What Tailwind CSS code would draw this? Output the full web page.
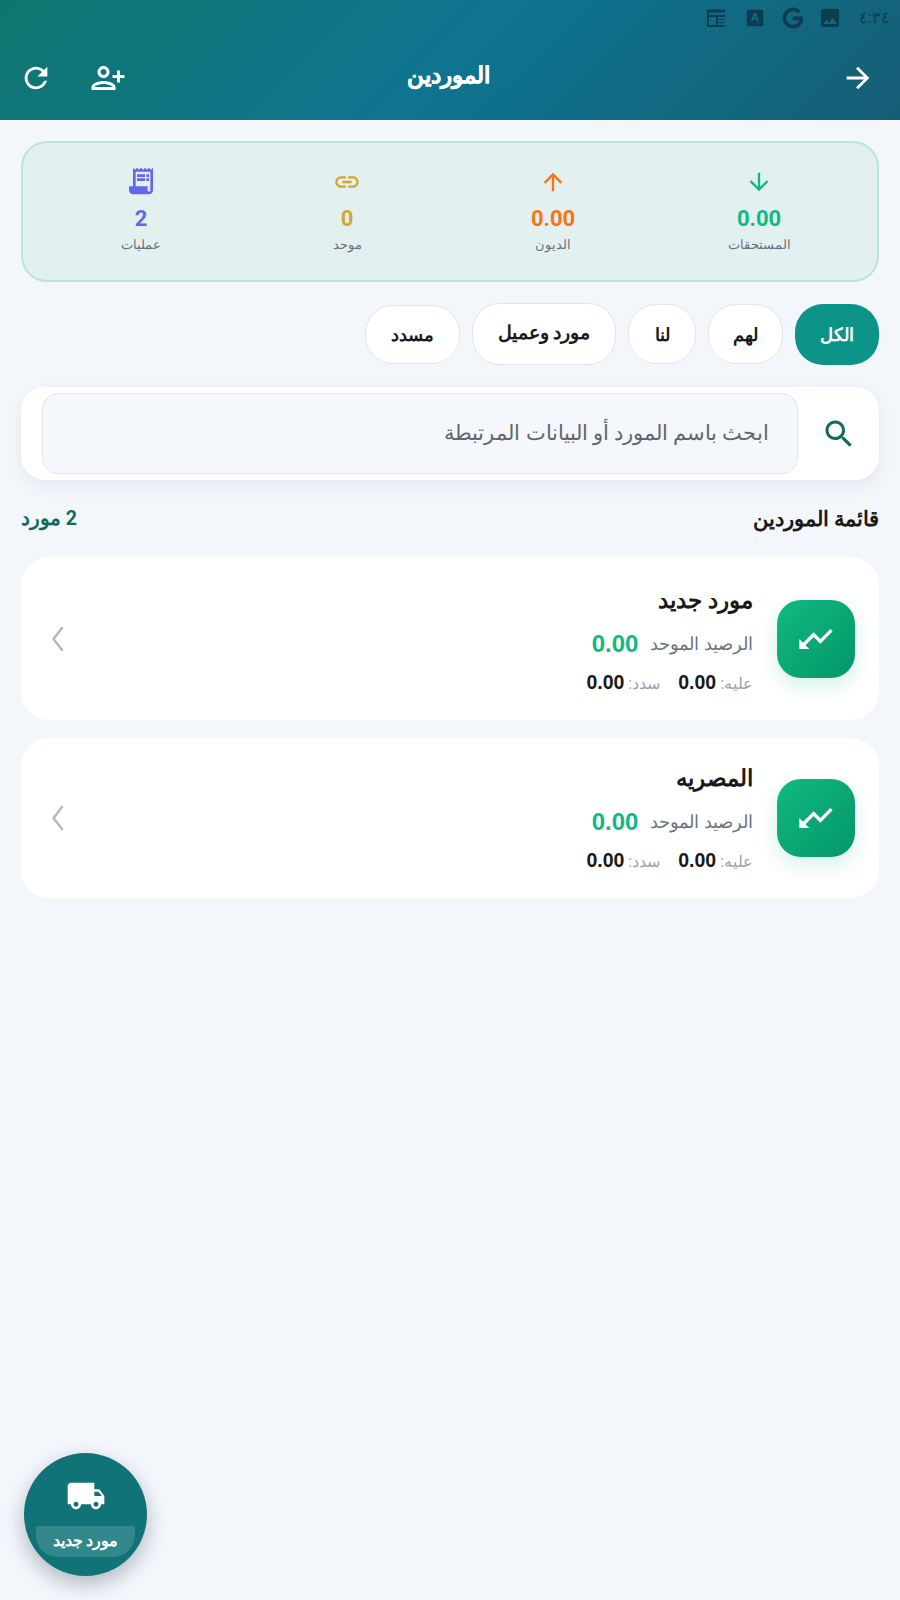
<!DOCTYPE html>
<html lang="ar" dir="rtl">
<head>
<meta charset="utf-8">
<script src="https://cdn.jsdelivr.net/npm/@tailwindcss/browser@4"></script>
</head>
<body class="bg-[#f3f6fb]">
<div class="relative w-[900px] h-[1600px] overflow-hidden bg-[#f3f6fb] font-['Roboto','Noto_Sans',sans-serif]">

  <header class="h-[120px] bg-[linear-gradient(135deg,#0f766e_0%,#0e7490_50%,#155e75_100%)]">
    <div class="h-[36px] flex items-center pr-[10px] gap-[14px] text-[#0b3d4f]">
      <span class="text-[16px] w-[30px] text-center ml-[4px]">٤:٣٤</span>
      <svg class="w-[24px] h-[24px]" viewBox="0 0 24 24" fill="currentColor"><path d="M21 19V5c0-1.100-.9-2-2-2H5c-1.100 0-2 .9-2 2v14c0 1.100.9 2 2 2h14c1.100 0 2-.9 2-2zM8.500 13.500l2.500 3.010L14.500 12l4.500 6H5l3.500-4.500z"/></svg>
      <svg class="w-[24px] h-[24px] -mr-[1px]" viewBox="0 0 24 24" fill="currentColor" stroke="currentColor" stroke-width="1"><path d="M21.350 11.100h-9.170v2.730h6.510c-.33 3.810-3.500 5.440-6.500 5.440C8.360 19.270 5 16.250 5 12c0-4.100 3.200-7.270 7.200-7.270 3.090 0 4.900 1.970 4.900 1.970L19 4.720S16.560 2 12.100 2C6.420 2 2.030 6.800 2.030 12c0 5.050 4.130 10 10.220 10 5.350 0 9.250-3.670 9.250-9.090 0-1.150-.15-1.810-.15-1.810z"/></svg>
      <svg class="w-[22px] h-[22px] mx-[1px]" viewBox="0 0 24 24" fill="currentColor"><path fill-rule="evenodd" d="M5 3h14c1.100 0 2 .9 2 2v14c0 1.100-.9 2-2 2H5c-1.100 0-2-.9-2-2V5c0-1.100.9-2 2-2zm5.800 3.500L7.500 15.500h2l.6-1.800h3.600l.6 1.800h2L13.200 6.500h-2.400zm1.100 2.300 1.200 3.300h-2.400l1.200-3.300zM14 17h1v1h-1zm2 0h1v1h-1zm2 0h1v1h-1z"/></svg>
      <svg class="w-[24px] h-[24px]" viewBox="0 0 24 24" fill="currentColor"><path fill-rule="evenodd" d="M2 3l1 1 1-1 1 1 1-1 1 1 1-1 1 1 1-1 1 1 1-1 1 1 1-1 1 1 1-1 1 1 1-1 1 1 1-1v16c0 1.100-.9 2-2 2H4c-1.100 0-2-.9-2-2V3zm2 3.500V9h16V6.500H4zM4 11v8h7v-8H4zm9 0v2h7v-2h-7zm0 3v2h7v-2h-7zm0 3v2h7v-2h-7z"/></svg>
    </div>
    <div class="h-[78px] grid grid-cols-[1fr_auto_1fr] items-center pr-[25px] pl-[19px] pt-[6px] text-white">
      <svg class="w-[34px] h-[34px] justify-self-start" viewBox="0 0 24 24" fill="currentColor"><path d="M12 4l-1.410 1.410L16.170 11H4v2h12.170l-5.580 5.590L12 20l8-8z"/></svg>
      <h1 class="text-[23px] font-bold leading-none -mt-[6px] mr-[-3px] [-webkit-text-stroke:0.4px_white]">الموردين</h1>
      <div class="flex items-center justify-self-end gap-[37px]">
        <svg class="w-[36px] h-[36px] -scale-x-100" viewBox="0 0 24 24" fill="currentColor"><path d="M15 12c2.210 0 4-1.790 4-4s-1.790-4-4-4-4 1.790-4 4 1.790 4 4 4zm0-6c1.100 0 2 .9 2 2s-.9 2-2 2-2-.9-2-2 .9-2 2-2zm0 8c-2.670 0-8 1.340-8 4v2h16v-2c0-2.660-5.330-4-8-4zm-6 4c.22-.72 3.310-2 6-2 2.700 0 5.800 1.290 6 2H9zm-3-3v-3h3v-2H6V7H4v3H1v2h3v3h2z"/></svg>
        <svg class="w-[34px] h-[34px]" viewBox="0 0 24 24" fill="currentColor"><path d="M17.650 6.350C16.200 4.900 14.210 4 12 4c-4.420 0-7.990 3.580-7.990 8s3.570 8 7.990 8c3.730 0 6.840-2.550 7.730-6h-2.080c-.82 2.330-3.040 4-5.650 4-3.310 0-6-2.690-6-6s2.690-6 6-6c1.660 0 3.140.69 4.220 1.780L13 11h7V4l-2.350 2.350z"/></svg>
      </div>
    </div>
  </header>

  <main class="px-[21px] pt-[21px]">
    <section class="h-[141px] rounded-[26px] border-2 border-[#b8e6da] bg-[#e2f1ef] grid grid-cols-4 px-[15px] pt-[25px]">
      <div class="flex flex-col items-center">
        <svg class="w-[28px] h-[28px] text-[#10b981]" viewBox="0 0 24 24" fill="currentColor"><path d="M20 12l-1.410-1.410L13 16.170V4h-2v12.170l-5.580-5.590L4 12l8 8 8-8z"/></svg>
        <span class="mt-[10px] text-[22px] leading-[26px] font-bold text-[#10b981]">0.00</span>
        <span class="mt-[4px] text-[13px] leading-[18px] text-[#6b7280]">المستحقات</span>
      </div>
      <div class="flex flex-col items-center">
        <svg class="w-[28px] h-[28px] text-[#f97316]" viewBox="0 0 24 24" fill="currentColor"><path d="M4 12l1.410 1.410L11 7.830V20h2V7.830l5.580 5.590L20 12l-8-8-8 8z"/></svg>
        <span class="mt-[10px] text-[22px] leading-[26px] font-bold text-[#f97316]">0.00</span>
        <span class="mt-[4px] text-[13px] leading-[18px] text-[#6b7280]">الديون</span>
      </div>
      <div class="flex flex-col items-center">
        <svg class="w-[28px] h-[28px] text-[#d4a72c]" viewBox="0 0 24 24" fill="currentColor"><path d="M3.900 12c0-1.710 1.390-3.100 3.100-3.100h4V7H7c-2.760 0-5 2.240-5 5s2.240 5 5 5h4v-1.900H7c-1.710 0-3.100-1.390-3.100-3.100zM8 13h8v-2H8v2zm9-6h-4v1.900h4c1.710 0 3.100 1.390 3.100 3.100s-1.390 3.100-3.100 3.100h-4V17h4c2.760 0 5-2.240 5-5s-2.240-5-5-5z"/></svg>
        <span class="mt-[10px] text-[22px] leading-[26px] font-bold text-[#d4a72c]">0</span>
        <span class="mt-[4px] text-[13px] leading-[18px] text-[#6b7280]">موحد</span>
      </div>
      <div class="flex flex-col items-center">
        <svg class="w-[32px] h-[32px] -mt-[3px] -mb-[1px] text-[#6366f1]" viewBox="0 0 24 24" fill="currentColor"><path d="M19.500 3.500 18 2l-1.500 1.500L15 2l-1.500 1.500L12 2l-1.500 1.500L9 2 7.500 3.500 6 2v14H3v3c0 1.660 1.340 3 3 3h12c1.660 0 3-1.340 3-3V2l-1.500 1.500zM19 19c0 .55-.45 1-1 1s-1-.45-1-1v-3H8V5h11v14zM9 7h6v2H9zm7 0h2v2h-2zm-7 3h6v2H9zm7 0h2v2h-2z"/></svg>
        <span class="mt-[10px] text-[22px] leading-[26px] font-bold text-[#6366f1]">2</span>
        <span class="mt-[4px] text-[13px] leading-[18px] text-[#6b7280]">عمليات</span>
      </div>
    </section>

    <nav class="mt-[20px] flex items-center gap-[12px] h-[64px]">
      <span class="w-[84px] h-[61px] justify-center flex items-center rounded-[28px] bg-[#0d9488] text-white text-[18px] font-bold">الكل</span>
      <span class="w-[75px] h-[60px] justify-center flex items-center rounded-[28px] bg-white border-[1.5px] border-[#e2e5ea] text-[#1a1a1a] text-[18px] font-semibold">لهم</span>
      <span class="w-[68px] h-[60px] justify-center flex items-center rounded-[28px] bg-white border-[1.5px] border-[#e2e5ea] text-[#1a1a1a] text-[18px] font-semibold">لنا</span>
      <span class="w-[144px] h-[62px] justify-center flex items-center rounded-[28px] bg-white border-[1.5px] border-[#e2e5ea] text-[#1a1a1a] text-[18.500px] font-semibold">مورد وعميل</span>
      <span class="w-[95px] h-[59px] justify-center flex items-center rounded-[28px] bg-white border-[1.5px] border-[#e2e5ea] text-[#1a1a1a] text-[18px] font-semibold">مسدد</span>
    </nav>

    <section class="mt-[21px] h-[93px] rounded-[24px] bg-white shadow-[0_6px_18px_rgba(15,23,42,0.06)] flex items-center pr-[22px] pl-[21px] gap-[23px]">
      <svg class="w-[36px] h-[36px] shrink-0 text-[#0f6b5f]" viewBox="0 0 24 24" fill="currentColor"><path d="M15.500 14h-.79l-.28-.27C15.410 12.590 16 11.110 16 9.500 16 5.910 13.090 3 9.500 3S3 5.910 3 9.500 5.910 16 9.500 16c1.610 0 3.090-.59 4.230-1.570l.27.28v.79l5 4.990L20.490 19l-4.990-5zm-6 0C7.010 14 5 11.990 5 9.500S7.010 5 9.500 5 14 7.010 14 9.500 11.990 14 9.500 14z"/></svg>
      <div class="flex-1 h-[81px] rounded-[16px] border-[1.5px] border-[#e1e5ec] bg-[#f4f7fb] flex items-center px-[28px] text-[20.600px] text-[#5f6670]">ابحث باسم المورد أو البيانات المرتبطة</div>
    </section>

    <div class="mt-[25px] flex items-center justify-between h-[30px]">
      <h2 class="text-[21px] font-semibold text-[#1a1a1a]">قائمة الموردين</h2>
      <span class="text-[19.500px] font-bold text-[#0f6b5f] -mt-[3px]">2 مورد</span>
    </div>

    <section class="mt-[22px] flex flex-col gap-[18px]">
      <article class="h-[163px] rounded-[28px] bg-white flex items-center pr-[24px] pl-[27px]">
        <div class="w-[78px] h-[78px] shrink-0 rounded-[24px] bg-gradient-to-br from-[#10b981] to-[#059669] shadow-[0_8px_20px_rgba(16,185,129,0.18)] flex items-center justify-center text-white">
          <svg class="w-[40px] h-[40px] -scale-x-100" viewBox="0 0 24 24" fill="currentColor"><path d="M16 18l2.290-2.290-4.880-4.880-4 4L2 7.410 3.410 6l6 6 4-4 6.300 6.290L22 12v6z"/></svg>
        </div>
        <div class="flex-1 mr-[24px] pt-[5px]">
          <div class="text-[23px] leading-[30px] font-semibold text-[#1a1a1a]">مورد جديد</div>
          <div class="mt-[13px] flex items-center gap-[12px] h-[30px]"><span class="text-[18.400px] text-[#6b7280]">الرصيد الموحد</span><span class="text-[24px] font-bold text-[#10b981] font-['Liberation_Sans']">0.00</span></div>
          <div class="mt-[11px] flex items-center gap-[18px] h-[26px] text-[16px] text-[#9ca3af]"><span>عليه: <b class="text-[19.500px] text-[#1a1a1a] font-['Liberation_Sans']">0.00</b></span><span>سدد: <b class="text-[19.500px] text-[#1a1a1a] font-['Liberation_Sans']">0.00</b></span></div>
        </div>
        <svg class="w-[20px] h-[28px] text-[#b5b8bd]" viewBox="0 0 20 28" fill="none" stroke="currentColor" stroke-width="2.500" stroke-linecap="round" stroke-linejoin="round"><path d="M14 3 5.500 14 14 25"/></svg>
      </article>
      <article class="h-[160px] rounded-[28px] bg-white flex items-center pr-[24px] pl-[27px]">
        <div class="w-[78px] h-[78px] shrink-0 rounded-[24px] bg-gradient-to-br from-[#10b981] to-[#059669] shadow-[0_8px_20px_rgba(16,185,129,0.18)] flex items-center justify-center text-white">
          <svg class="w-[40px] h-[40px] -scale-x-100" viewBox="0 0 24 24" fill="currentColor"><path d="M16 18l2.290-2.290-4.880-4.880-4 4L2 7.410 3.410 6l6 6 4-4 6.300 6.290L22 12v6z"/></svg>
        </div>
        <div class="flex-1 mr-[24px] pt-[1px]">
          <div class="text-[23px] leading-[30px] font-semibold text-[#1a1a1a]">المصريه</div>
          <div class="mt-[13px] flex items-center gap-[12px] h-[30px]"><span class="text-[18.400px] text-[#6b7280]">الرصيد الموحد</span><span class="text-[24px] font-bold text-[#10b981] font-['Liberation_Sans']">0.00</span></div>
          <div class="mt-[11px] flex items-center gap-[18px] h-[26px] text-[16px] text-[#9ca3af]"><span>عليه: <b class="text-[19.500px] text-[#1a1a1a] font-['Liberation_Sans']">0.00</b></span><span>سدد: <b class="text-[19.500px] text-[#1a1a1a] font-['Liberation_Sans']">0.00</b></span></div>
        </div>
        <svg class="w-[20px] h-[28px] text-[#b5b8bd]" viewBox="0 0 20 28" fill="none" stroke="currentColor" stroke-width="2.500" stroke-linecap="round" stroke-linejoin="round"><path d="M14 3 5.500 14 14 25"/></svg>
      </article>
    </section>
  </main>

  <button class="absolute left-[24px] top-[1453px] w-[123px] h-[123px] rounded-full bg-[#0f7377] shadow-[0_8px_20px_rgba(15,23,42,0.28)] flex flex-col items-center justify-start text-white">
    <svg class="mt-[23px] w-[40px] h-[40px]" viewBox="0 0 24 24" fill="currentColor"><path d="M20 8h-3V4H3c-1.100 0-2 .9-2 2v11h2c0 1.660 1.340 3 3 3s3-1.340 3-3h6c0 1.660 1.340 3 3 3s3-1.340 3-3h2v-5l-3-4zM6 18.500c-.83 0-1.500-.67-1.500-1.500s.67-1.500 1.500-1.500 1.500.67 1.500 1.500-.67 1.500-1.500 1.500zm13.500-9l1.960 2.500H17V9.500h2.500zm-1.500 9c-.83 0-1.500-.67-1.500-1.500s.67-1.500 1.500-1.500 1.500.67 1.500 1.500-.67 1.500-1.500 1.500z"/></svg>
    <span class="mt-[10px] w-[99px] h-[31px] rounded-b-[22px] bg-white/15 text-[15.500px] font-bold leading-[30px]">مورد جديد</span>
  </button>
</div>
</body>
</html>
